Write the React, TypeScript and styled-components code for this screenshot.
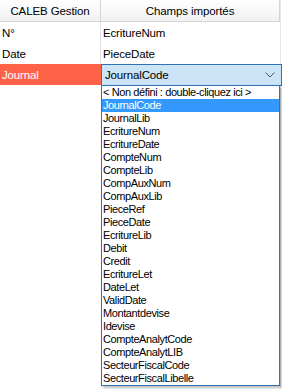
import React from "react";
import styled, { createGlobalStyle } from "styled-components";

const Global = createGlobalStyle`
  html, body { margin: 0; padding: 0; background: #ffffff; }
  body { font-family: "Liberation Sans", Arial, sans-serif; font-size: 11px; color: #000; }
`;

const Grid = styled.div`
  position: relative;
  width: 280px;
  height: 389px;
  display: grid;
  grid-template-columns: 101px 1fr;
  grid-auto-rows: 21px;
  grid-template-rows: 22px;
  border-right: 1px solid #e6e6e6;
  align-content: start;
`;

const HeaderCell = styled.div`
  display: flex;
  align-items: center;
  justify-content: center;
  background: linear-gradient(#ffffff, #f1f1f1);
  border-right: 1px solid #d5d5d5;
  border-bottom: 1px solid #d5d5d5;
  font-size: 11.5px;
  letter-spacing: -0.1px;
  color: #000;
  box-sizing: border-box;
`;

const Cell = styled.div<{ $active?: boolean; $first?: boolean }>`
  display: flex;
  align-items: center;
  padding-left: 2px;
  box-sizing: border-box;
  font-size: 11.5px;
  letter-spacing: -0.15px;
  background: ${(p) => (p.$active ? "#ff6347" : "#ffffff")};
  color: ${(p) => (p.$active ? "#ffffff" : "#000000")};
  border-right: ${(p) => (p.$first ? "1px solid #e2e2e2" : "none")};
`;

const ComboCell = styled.div`
  position: relative;
  margin-right: -2px;
`;

const Combo = styled.div`
  height: 22px;
  box-sizing: border-box;
  border: 1px solid #2f73b5;
  background: #cce4f7;
  display: flex;
  align-items: center;
  justify-content: space-between;
  padding: 0 6px 0 3px;
  font-size: 11.5px;
  letter-spacing: -0.15px;
`;

const List = styled.div`
  position: absolute;
  left: 0;
  top: 21px;
  width: 179px;
  box-sizing: border-box;
  border: 1px solid #2f73b5;
  background: #ffffff;
  box-shadow: 2px 2px 3px rgba(0, 0, 0, 0.28);
  display: flex;
  flex-direction: column;
  z-index: 2;
`;

const Item = styled.div<{ $selected?: boolean }>`
  height: 13px;
  line-height: 13px;
  padding-left: 1px;
  font-size: 11px;
  letter-spacing: -0.4px;
  white-space: nowrap;
  background: ${(p) => (p.$selected ? "#3399ff" : "transparent")};
  color: ${(p) => (p.$selected ? "#ffffff" : "#000000")};
`;

const items = [
  "< Non défini : double-cliquez ici >",
  "JournalCode",
  "JournalLib",
  "EcritureNum",
  "EcritureDate",
  "CompteNum",
  "CompteLib",
  "CompAuxNum",
  "CompAuxLib",
  "PieceRef",
  "PieceDate",
  "EcritureLib",
  "Debit",
  "Credit",
  "EcritureLet",
  "DateLet",
  "ValidDate",
  "Montantdevise",
  "Idevise",
  "CompteAnalytCode",
  "CompteAnalytLIB",
  "SecteurFiscalCode",
  "SecteurFiscalLibelle",
];

export default function App() {
  return (
    <>
      <Global />
      <Grid>
        <HeaderCell>CALEB Gestion</HeaderCell>
        <HeaderCell>Champs importés</HeaderCell>
        <Cell $first>N°</Cell>
        <Cell>EcritureNum</Cell>
        <Cell $first>Date</Cell>
        <Cell>PieceDate</Cell>
        <Cell $active>Journal</Cell>
        <ComboCell>
          <Combo>
            <span>JournalCode</span>
            <svg width="10" height="6" viewBox="0 0 10 6">
              <polyline points="0.5,0.5 5,5 9.5,0.5" fill="none" stroke="#555" strokeWidth="1" />
            </svg>
          </Combo>
          <List>
            {items.map((t) => (
              <Item key={t} $selected={t === "JournalCode"}>
                {t}
              </Item>
            ))}
          </List>
        </ComboCell>
      </Grid>
    </>
  );
}
